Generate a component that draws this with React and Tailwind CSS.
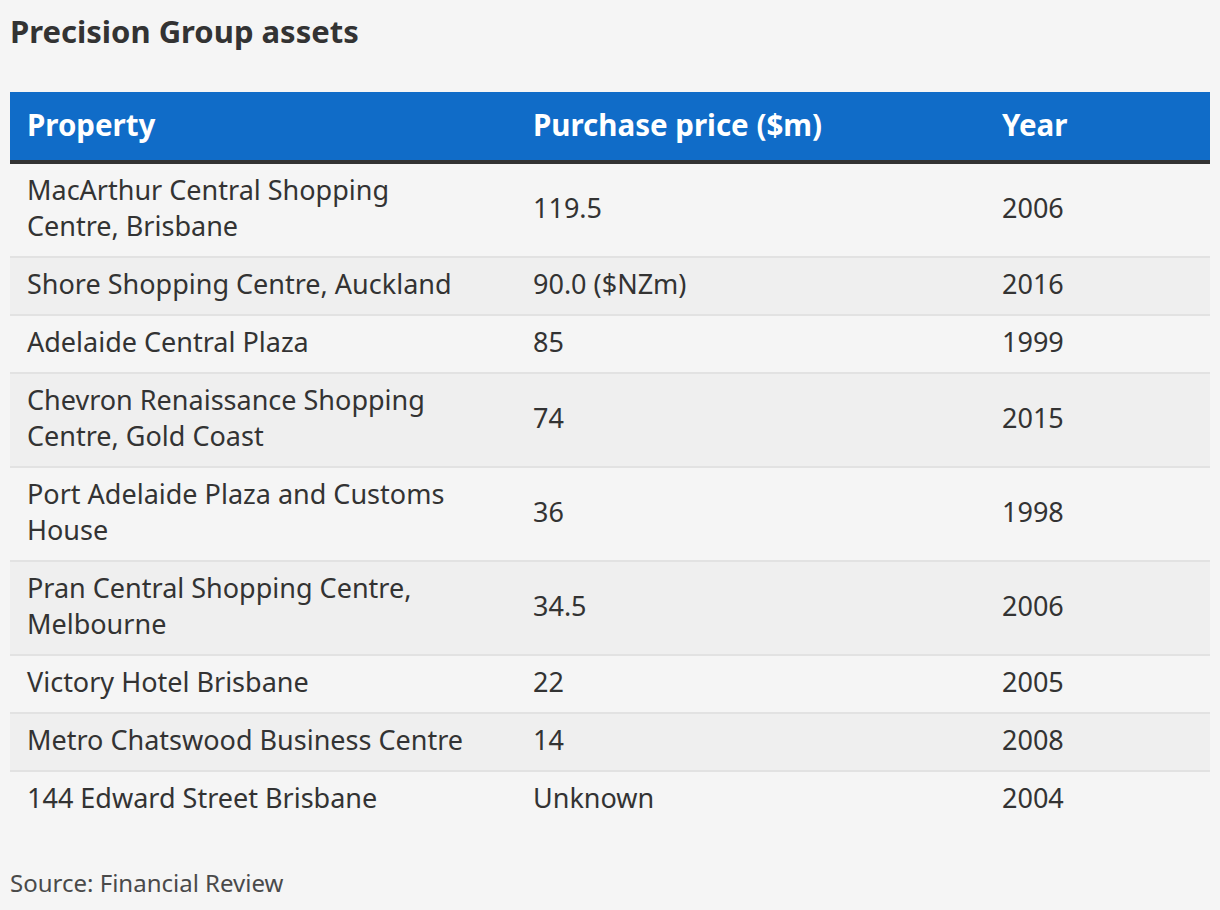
const rows = [
  ["MacArthur Central Shopping Centre, Brisbane", "119.5", "2006"],
  ["Shore Shopping Centre, Auckland", "90.0 ($NZm)", "2016"],
  ["Adelaide Central Plaza", "85", "1999"],
  ["Chevron Renaissance Shopping Centre, Gold Coast", "74", "2015"],
  ["Port Adelaide Plaza and Customs House", "36", "1998"],
  ["Pran Central Shopping Centre, Melbourne", "34.5", "2006"],
  ["Victory Hotel Brisbane", "22", "2005"],
  ["Metro Chatswood Business Centre", "14", "2008"],
  ["144 Edward Street Brisbane", "Unknown", "2004"],
];

export default function App() {
  return (
    <div className="min-h-[910px] bg-[#f5f5f5] text-[#333] px-[10px] pt-[11px]" style={{ fontFamily: '"Noto Sans", sans-serif' }}>
      <h1 className="text-[31px] font-bold leading-[40px]">Precision Group assets</h1>
      <table className="w-full mt-[41px] border-collapse">
        <thead>
          <tr className="bg-[#106cc8] text-white border-b-4 border-[#333]">
            <th className="w-[506px] text-left font-bold text-[29.5px] leading-[36px] pl-[17px] pt-[15px] pb-[17px]">Property</th>
            <th className="w-[469px] text-left font-bold text-[29.5px] leading-[36px] pl-[17px] pt-[15px] pb-[17px]">Purchase price ($m)</th>
            <th className="text-left font-bold text-[29.5px] leading-[36px] pl-[17px] pt-[15px] pb-[17px]">Year</th>
          </tr>
        </thead>
        <tbody>
          {rows.map((r, i) => (
            <tr key={i} className={(i % 2 === 1 ? "bg-[#efefef] " : "") + (i < rows.length - 1 ? "border-b-2 border-[#e2e2e2]" : "")}>
              <td className="text-[27px] leading-[36px] pl-[17px] pr-[34px] pt-[8px] pb-[12px] align-middle">{r[0]}</td>
              <td className="text-[27px] leading-[36px] pl-[17px] pt-[8px] pb-[12px] align-middle">{r[1]}</td>
              <td className="text-[27px] leading-[36px] pl-[17px] pt-[8px] pb-[12px] align-middle">{r[2]}</td>
            </tr>
          ))}
        </tbody>
      </table>
      <p className="mt-[39px] text-[24px] leading-[32px] text-[#4a4a4a]">Source: Financial Review</p>
    </div>
  );
}
